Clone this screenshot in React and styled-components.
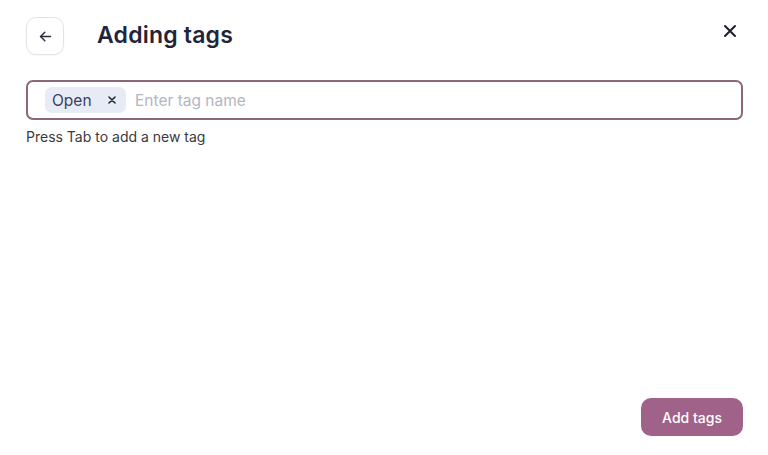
import React from "react";
import styled, { createGlobalStyle } from "styled-components";

const Global = createGlobalStyle`
  html, body { margin: 0; padding: 0; background: #fff; }
  body { font-family: Inter, "Noto Sans", sans-serif; }
  * { box-sizing: border-box; }
`;

const Page = styled.div`
  width: 768px;
  height: 455px;
  display: flex;
  flex-direction: column;
  padding: 17px 25px 19px 26px;
`;

const Header = styled.div`
  display: flex;
  align-items: center;
  height: 38px;
`;

const BackButton = styled.button`
  width: 38px;
  height: 38px;
  border: 1.5px solid #e3e3e6;
  border-radius: 10px;
  background: #fff;
  display: flex;
  align-items: center;
  justify-content: center;
  padding: 0;
  color: #2a2c3a;
  box-shadow: 0 1px 2px rgba(0,0,0,0.04);
`;

const Title = styled.h1`
  margin: -2px 0 0 33px;
  font-size: 23px;
  font-weight: 600;
  color: #22243a;
  letter-spacing: 0.2px;
  flex: 1;
`;

const CloseButton = styled.button`
  border: none;
  background: none;
  padding: 0;
  width: 24px;
  height: 24px;
  display: flex;
  align-items: center;
  justify-content: center;
  margin-right: 1px;
  margin-top: -10px;
  color: #1e1f2b;
`;

const TagInput = styled.div`
  margin-top: 25px;
  height: 40px;
  border: 2px solid #8c6779;
  border-radius: 7px;
  display: flex;
  align-items: center;
  padding: 0 17px;
  gap: 9px;
`;

const Chip = styled.span`
  height: 26px;
  width: 81px;
  border-radius: 7px;
  background: #e7ebf6;
  display: flex;
  align-items: center;
  justify-content: space-between;
  padding: 0 9px 0 7px;
  font-size: 15.5px;
  color: #3b4058;
`;

const ChipX = styled.span`
  display: flex;
  color: #23263a;
`;

const Input = styled.input`
  border: none;
  outline: none;
  flex: 1;
  font-family: inherit;
  font-size: 15.5px;
  color: #333;
  padding: 0;
  background: transparent;
  &::placeholder { color: #b3b6c0; }
`;

const Hint = styled.div`
  margin-top: 8px;
  font-size: 14px;
  color: #3a3a3f;
`;

const Footer = styled.div`
  margin-top: auto;
  display: flex;
  justify-content: flex-end;
`;

const PrimaryButton = styled.button`
  width: 102px;
  height: 38px;
  border: none;
  border-radius: 10px;
  background: #a1628a;
  color: #fff;
  font-family: inherit;
  font-size: 14px;
  font-weight: 500;
`;

export default function App() {
  return (
    <>
      <Global />
      <Page>
        <Header>
          <BackButton aria-label="Back">
            <svg width="17" height="17" viewBox="0 0 24 24" fill="none" stroke="currentColor" strokeWidth="2" strokeLinecap="round" strokeLinejoin="round">
              <path d="M19 12H5" />
              <path d="M11 6l-6 6 6 6" />
            </svg>
          </BackButton>
          <Title>Adding tags</Title>
          <CloseButton aria-label="Close">
            <svg width="14" height="14" viewBox="0 0 14 14" fill="none" stroke="currentColor" strokeWidth="2" strokeLinecap="round">
              <path d="M2 2l10 10M12 2L2 12" />
            </svg>
          </CloseButton>
        </Header>
        <TagInput>
          <Chip>
            Open
            <ChipX>
              <svg width="10" height="10" viewBox="0 0 10 10" fill="none" stroke="currentColor" strokeWidth="1.6" strokeLinecap="round">
                <path d="M2 2l6 6M8 2L2 8" />
              </svg>
            </ChipX>
          </Chip>
          <Input placeholder="Enter tag name" />
        </TagInput>
        <Hint>Press Tab to add a new tag</Hint>
        <Footer>
          <PrimaryButton>Add tags</PrimaryButton>
        </Footer>
      </Page>
    </>
  );
}
